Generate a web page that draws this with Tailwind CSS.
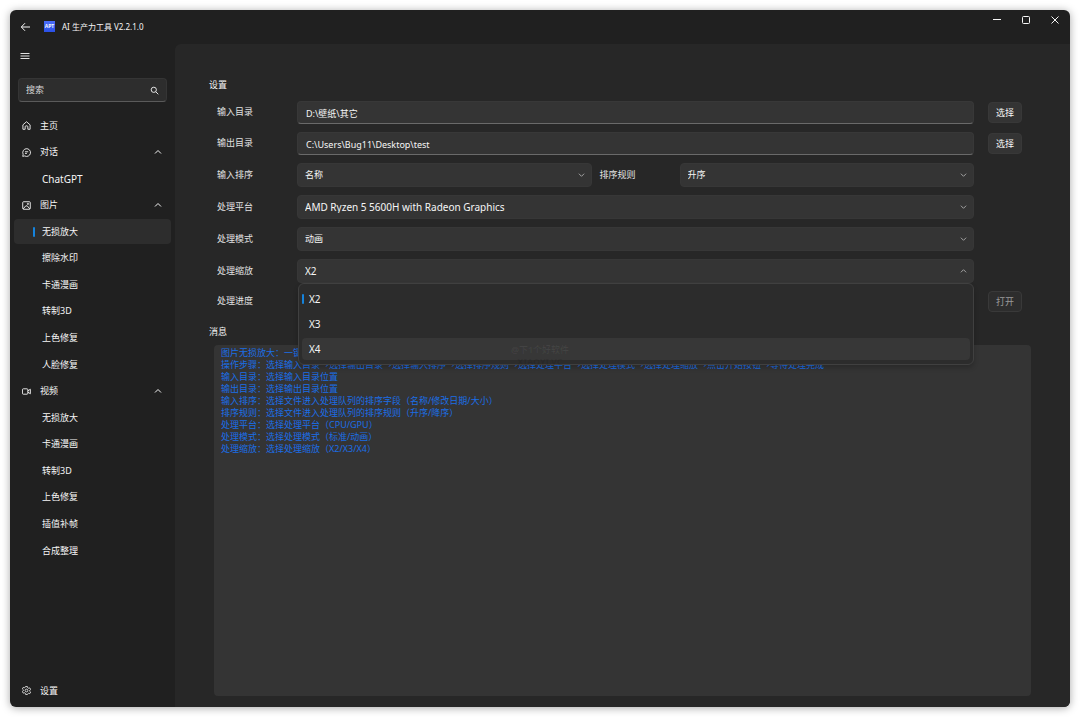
<!DOCTYPE html>
<html lang="zh-CN">
<head>
    <meta charset="UTF-8">
    <meta name="viewport" content="width=device-width, initial-scale=1.0">
    <title>AI 生产力工具 V2.2.1.0</title>
    <script src="https://cdn.jsdelivr.net/npm/@tailwindcss/browser@4"></script>
</head>
<body class="bg-white min-h-screen p-[10px] flex font-['Noto_Sans','Noto_Sans_CJK_SC',sans-serif] text-[9px] leading-[12px] text-[#f6f6f6]">
    <!-- Shared icons -->
    <svg class="hidden">
        <symbol id="up" viewBox="0 0 8 8"><path d="M1 5.5 4 2.5 7 5.5" fill="none" stroke="currentColor"/></symbol>
        <symbol id="down" viewBox="0 0 8 8"><path d="M1 2.5 4 5.5 7 2.5" fill="none" stroke="currentColor"/></symbol>
    </svg>

    <div class="relative flex-1 flex flex-col bg-[#202020] rounded-md overflow-hidden shadow-[0_1px_8px_rgba(0,0,0,0.35)]">
        <!-- Title bar -->
        <header class="h-[34px] flex items-center pl-2.5 pb-px shrink-0">
            <button type="button" aria-label="返回" class="mr-[13px]">
                <svg class="w-[11px] h-[10px]" viewBox="0 0 10 10" fill="none" stroke="currentColor"><path d="M9.5 5H1M4.5 1.2.8 5l3.7 3.8"/></svg>
            </button>
            <span class="w-[11px] h-[11px] mr-[7px] bg-linear-to-b from-[#4a6cf7] to-[#2a50e8] flex items-center justify-center text-[5px] leading-none font-bold">APT</span>
            <h1 class="text-[8px]">AI 生产力工具 V2.2.1.0</h1>
            <div class="ml-auto self-start flex gap-[19px] pt-[5px] pr-[10px]">
                <button type="button" aria-label="最小化"><svg class="w-[10px] h-[10px]" viewBox="0 0 10 10" fill="none" stroke="currentColor"><path d="M1 4.5h8"/></svg></button>
                <button type="button" aria-label="最大化"><svg class="w-[10px] h-[10px]" viewBox="0 0 10 10" fill="none" stroke="currentColor"><rect x="1.5" y="1.5" width="7" height="7" rx="1"/></svg></button>
                <button type="button" aria-label="关闭"><svg class="w-[10px] h-[10px]" viewBox="0 0 10 10" fill="none" stroke="currentColor"><path d="m1.5 1.5 7 7m0-7-7 7"/></svg></button>
            </div>
        </header>

        <div class="flex-1 flex">
            <!-- Sidebar -->
            <aside class="w-[165px] shrink-0 flex flex-col">
                <button type="button" aria-label="菜单" class="self-start ml-2.5 mt-[7px]">
                    <svg class="w-[10px] h-[10px]" viewBox="0 0 10 10" fill="none" stroke="currentColor" stroke-width=".9"><path d="M.5 2.5h9M.5 5h9M.5 7.5h9"/></svg>
                </button>

                <label class="mt-[17px] mx-2 h-6 flex items-center px-[7px] rounded bg-[#2d2d2d] border border-[#353535] border-b-[#5a5a5a]">
                    <input type="text" placeholder="搜索" aria-label="搜索" class="flex-1 min-w-0 outline-none placeholder:text-[#d8d8d8]">
                    <svg class="w-[9px] h-[9px]" viewBox="0 0 9 9" fill="none" stroke="currentColor" stroke-width=".9"><circle cx="3.8" cy="3.8" r="2.6"/><path d="m5.8 5.8 2.5 2.5"/></svg>
                </label>

                <nav class="mt-[11px] h-[450px] px-1 flex flex-col justify-between">
                    <a href="#" class="h-[25px] flex items-center pl-2 pr-[9px] rounded">
                        <svg class="w-[9px] h-[9px] mr-[9px]" viewBox="0 0 10 10" fill="none" stroke="currentColor"><path d="M1 4.3 5 .8l4 3.5v4.9H6.5V6.4a1 1 0 0 0-1-1h-1a1 1 0 0 0-1 1v2.8H1z" stroke-linejoin="round"/></svg>
                        主页
                    </a>
                    <a href="#" class="h-[25px] flex items-center pl-2 pr-[9px] rounded">
                        <svg class="w-[9px] h-[9px] mr-[9px]" viewBox="0 0 10 10" fill="none" stroke="currentColor"><path d="M.8 9.3 1.3 7A4.3 4.3 0 1 1 3 8.8zM3.3 4.2h3.6M3.3 6h2.2" stroke-linejoin="round"/></svg>
                        对话
                        <svg class="w-2 h-2 ml-auto"><use href="#up"/></svg>
                    </a>
                    <a href="#" class="h-[25px] flex items-center pl-7 rounded text-[10px]">ChatGPT</a>
                    <a href="#" class="h-[25px] flex items-center pl-2 pr-[9px] rounded">
                        <svg class="w-[9px] h-[9px] mr-[9px]" viewBox="0 0 10 10" fill="none" stroke="currentColor"><rect x=".8" y=".8" width="8.4" height="8.4" rx="1"/><path d="m1.3 8.8 2.9-3.4h1.6l2.9 3.4"/><circle cx="6.6" cy="3.2" r=".7"/></svg>
                        图片
                        <svg class="w-2 h-2 ml-auto"><use href="#up"/></svg>
                    </a>
                    <a href="#" class="h-[25px] flex items-center pl-[19px] rounded bg-[#2d2d2d]"><span class="w-0.5 h-[10px] mr-[7px] rounded-full bg-[#1583dc]"></span>无损放大</a>
                    <a href="#" class="h-[25px] flex items-center pl-7 rounded">擦除水印</a>
                    <a href="#" class="h-[25px] flex items-center pl-7 rounded">卡通漫画</a>
                    <a href="#" class="h-[25px] flex items-center pl-7 rounded">转制3D</a>
                    <a href="#" class="h-[25px] flex items-center pl-7 rounded">上色修复</a>
                    <a href="#" class="h-[25px] flex items-center pl-7 rounded">人脸修复</a>
                    <a href="#" class="h-[25px] flex items-center pl-2 pr-[9px] rounded">
                        <svg class="w-[9px] h-[9px] mr-[9px]" viewBox="0 0 10 10" fill="none" stroke="currentColor"><rect x=".5" y="2" width="6" height="6" rx="1"/><path d="m6.5 4.3 2.8-1.8v5L6.5 5.7" stroke-linejoin="round"/></svg>
                        视频
                        <svg class="w-2 h-2 ml-auto"><use href="#up"/></svg>
                    </a>
                    <a href="#" class="h-[25px] flex items-center pl-7 rounded">无损放大</a>
                    <a href="#" class="h-[25px] flex items-center pl-7 rounded">卡通漫画</a>
                    <a href="#" class="h-[25px] flex items-center pl-7 rounded">转制3D</a>
                    <a href="#" class="h-[25px] flex items-center pl-7 rounded">上色修复</a>
                    <a href="#" class="h-[25px] flex items-center pl-7 rounded">插值补帧</a>
                    <a href="#" class="h-[25px] flex items-center pl-7 rounded">合成整理</a>
                </nav>

                <a href="#" class="mt-auto mb-1 h-[25px] flex items-center pl-3">
                    <svg class="w-[9px] h-[9px] mr-[9px]" viewBox="0 0 10 10" fill="none" stroke="currentColor" stroke-width=".9"><path d="M4 .6h2l.3 1.3 1 .6 1.3-.4 1 1.7-1 .9v1.2l1 .9-1 1.7-1.3-.4-1 .6L6 9.4H4l-.3-1.3-1-.6-1.3.4-1-1.7 1-.9V4.1l-1-.9 1-1.7 1.3.4 1-.6z" stroke-linejoin="round"/><circle cx="5" cy="5" r="1.5"/></svg>
                    设置
                </a>
            </aside>

            <!-- Content -->
            <main class="flex-1 min-w-0 flex flex-col bg-[#272727] rounded-tl-md pt-[35px] pb-[11px] pl-[34px] pr-[39px]">
                <h2>设置</h2>

                <form class="mt-2.5 ml-2 mr-[9px] grid grid-cols-[80px_1fr_48px] gap-y-2 items-center">
                    <label for="input-dir" class="pb-px text-[#e2e2e2]">输入目录</label>
                    <input type="text" id="input-dir" value="D:\壁纸\其它" class="h-[23px] min-w-0 px-2 pt-0.5 rounded bg-[#343434] border border-[#383838] border-b-[#6a6a6a] outline-none">
                    <button type="button" class="ml-3.5 w-[34px] h-[21px] rounded bg-[#343434] border border-[#383838]">选择</button>

                    <label for="output-dir" class="pb-px text-[#e2e2e2]">输出目录</label>
                    <input type="text" id="output-dir" value="C:\Users\Bug11\Desktop\test" class="h-[23px] min-w-0 px-2 pt-0.5 rounded bg-[#343434] border border-[#383838] border-b-[#6a6a6a] outline-none">
                    <button type="button" class="ml-3.5 w-[34px] h-[21px] rounded bg-[#343434] border border-[#383838]">选择</button>

                    <label for="sort-field" class="pb-px text-[#e2e2e2]">输入排序</label>
                    <div class="grid grid-cols-[1fr_88px_1fr] items-center">
                        <div class="relative">
                            <select id="sort-field" class="appearance-none block w-full h-6 px-[7px] rounded bg-[#343434] border border-[#373737]">
                                <option>名称</option>
                                <option>修改日期</option>
                                <option>大小</option>
                            </select>
                            <svg class="absolute right-[7px] top-2 w-[7px] h-2 text-[#b0b0b0] pointer-events-none"><use href="#down"/></svg>
                        </div>
                        <label for="sort-rule" class="pl-2 pb-px text-[#e2e2e2]">排序规则</label>
                        <div class="relative">
                            <select id="sort-rule" class="appearance-none block w-full h-6 px-[7px] rounded bg-[#343434] border border-[#373737]">
                                <option>升序</option>
                                <option>降序</option>
                            </select>
                            <svg class="absolute right-[7px] top-2 w-[7px] h-2 text-[#b0b0b0] pointer-events-none"><use href="#down"/></svg>
                        </div>
                    </div>

                    <label for="platform" class="col-start-1 pb-px text-[#e2e2e2]">处理平台</label>
                    <div class="relative">
                        <select id="platform" class="appearance-none block w-full h-6 px-[7px] rounded bg-[#343434] border border-[#373737] text-[10px]">
                            <option>AMD Ryzen 5 5600H with Radeon Graphics</option>
                        </select>
                        <svg class="absolute right-[7px] top-2 w-[7px] h-2 text-[#b0b0b0] pointer-events-none"><use href="#down"/></svg>
                    </div>

                    <label for="mode" class="col-start-1 pb-px text-[#e2e2e2]">处理模式</label>
                    <div class="relative">
                        <select id="mode" class="appearance-none block w-full h-6 px-[7px] rounded bg-[#343434] border border-[#373737]">
                            <option>动画</option>
                            <option>标准</option>
                        </select>
                        <svg class="absolute right-[7px] top-2 w-[7px] h-2 text-[#b0b0b0] pointer-events-none"><use href="#down"/></svg>
                    </div>

                    <label for="scale" class="col-start-1 pb-px text-[#e2e2e2]">处理缩放</label>
                    <div class="relative text-[10px]">
                        <select id="scale" class="appearance-none block w-full h-6 px-[7px] rounded bg-[#343434] border border-[#373737]">
                            <option>X2</option>
                            <option>X3</option>
                            <option>X4</option>
                        </select>
                        <svg class="absolute right-[7px] top-2 w-[7px] h-2 text-[#b0b0b0] pointer-events-none"><use href="#up"/></svg>

                        <!-- Open scale menu -->
                        <ul role="listbox" aria-label="处理缩放" class="absolute z-10 top-full left-px right-0 flex flex-col gap-[3px] px-[3px] py-1 rounded-md bg-[#2c2c2c] border border-[#404040] shadow-[0_3px_5px_rgba(0,0,0,0.2)]">
                            <li role="option" aria-selected="true" class="h-[22px] flex items-center rounded"><span class="w-0.5 h-[10px] mr-[5px] rounded-full bg-[#1583dc]"></span>X2</li>
                            <li role="option" class="h-[22px] flex items-center pl-[7px] rounded">X3</li>
                            <li role="option" class="h-[22px] flex items-center pl-[7px] rounded bg-[#373737]">X4</li>
                        </ul>
                    </div>

                    <span class="col-start-1 pb-px text-[#e2e2e2]">处理进度</span>
                    <button type="button" disabled class="col-start-3 ml-3.5 w-[34px] h-[21px] rounded bg-[#2d2d2d] border border-[#393939] text-[#9a9a9a]">打开</button>
                </form>

                <h2 class="mt-3.5">消息</h2>
                <div class="mt-[7px] ml-[5px] flex-1 pt-0.5 pl-[7px] rounded bg-[#343434] text-[#1b6ee6] whitespace-nowrap">
                    <p>图片无损放大：一键无损放大图片</p>
                    <p>操作步骤：选择输入目录→选择输出目录→选择输入排序→选择排序规则→选择处理平台→选择处理模式→选择处理缩放→点击开始按钮→等待处理完成</p>
                    <p>输入目录：选择输入目录位置</p>
                    <p>输出目录：选择输出目录位置</p>
                    <p>输入排序：选择文件进入处理队列的排序字段（名称/修改日期/大小）</p>
                    <p>排序规则：选择文件进入处理队列的排序规则（升序/降序）</p>
                    <p>处理平台：选择处理平台（CPU/GPU）</p>
                    <p>处理模式：选择处理模式（标准/动画）</p>
                    <p>处理缩放：选择处理缩放（X2/X3/X4）</p>
                </div>
            </main>
        </div>

        <!-- Watermark -->
        <div class="absolute z-20 inset-0 pb-1.5 flex flex-col items-center justify-center pointer-events-none font-bold text-white/6">
            <span>@下1个好软件</span>
            <span class="text-black/10">XIAOYI.VC</span>
        </div>
    </div>
</body>
</html>
